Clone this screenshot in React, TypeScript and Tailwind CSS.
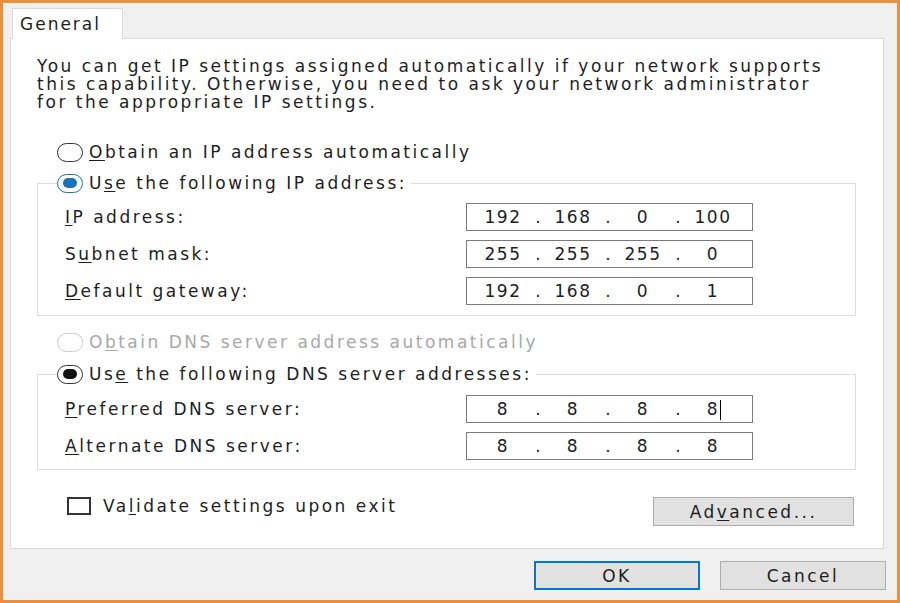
import type { ReactNode } from 'react';

const font = { fontFamily: '"DejaVu Sans", Verdana, sans-serif' };

const Radio = ({ checked, tone = 'blue', disabled }: { checked?: boolean; tone?: 'blue' | 'black'; disabled?: boolean }) => {
  const ring = disabled ? 'border-[#cccccc]' : checked && tone === 'blue' ? 'border-[#1c70b8]' : 'border-[#333333]';
  const dot = tone === 'blue' ? 'bg-[#1c70b8]' : 'bg-[#111111]';
  return (
    <span className={`w-[26px] h-[19px] rounded-full border-[1.5px] ${ring} bg-white flex items-center justify-center shrink-0`}>
      {checked && <span className={`w-[14px] h-[10px] rounded-full ${dot}`} />}
    </span>
  );
};

const IpBox = ({ parts, caret }: { parts: string[]; caret?: boolean }) => (
  <div className="w-[287px] h-[28px] border border-[#7a7a7a] bg-white flex items-center pl-[5px]">
    {parts.map((p, i) => (
      <div key={i} className="flex items-center">
        {i > 0 && <span className="w-[8px] text-center tracking-normal">.</span>}
        <span className="w-[62px] text-center relative tracking-[1.5px]">
          {p}
          {caret && i === 3 && <span className="absolute top-[0px] h-[20px] w-px bg-black ml-[1px]" />}
        </span>
      </div>
    ))}
  </div>
);

const FieldRow = ({ label, parts, caret }: { label: ReactNode; parts: string[]; caret?: boolean }) => (
  <div className="flex items-center h-[28px]">
    <span className="w-[401px]">{label}</span>
    <IpBox parts={parts} caret={caret} />
  </div>
);

export default function App() {
  return (
    <div
      className="w-[900px] h-[603px] border-[3px] border-[#e8913c] bg-[#f0f0f0] text-[17px] tracking-[2.5px] text-[#1e1e1e] leading-[18px] overflow-hidden"
      style={font}
    >
      <div className="ml-[9px] mt-[5px] w-[111px] h-[31px] bg-white border border-b-0 border-[#d9d9d9] relative z-10 -mb-px flex items-center pl-[7px] tracking-[2px]">
        General
      </div>

      <div className="ml-[7px] w-[874px] h-[511px] bg-white border border-[#d9d9d9] pl-[26px] pt-[18px]">
        <p className="whitespace-nowrap">
          You can get IP settings assigned automatically if your network supports
          <br />
          this capability. Otherwise, you need to ask your network administrator
          <br />
          for the appropriate IP settings.
        </p>

        <div className="flex items-center gap-[6px] h-[24px] mt-[29px] ml-[20px]">
          <Radio />
          <span>
            <u className="underline-offset-2">O</u>btain an IP address automatically
          </span>
        </div>

        <fieldset className="mt-[7px] w-[819px] border border-[#dcdcdc] pl-[27px] pr-0 pt-[8px] pb-[10px]">
          <legend className="ml-[-8px] flex items-center gap-[6px] h-[24px] bg-white pr-[4px]">
            <Radio checked tone="blue" />
            <span>
              U<u className="underline-offset-2">s</u>e the following IP address:
            </span>
          </legend>
          <div className="flex flex-col gap-[9px]">
            <FieldRow label={<><u className="underline-offset-2">I</u>P address:</>} parts={['192', '168', '0', '100']} />
            <FieldRow label={<>S<u className="underline-offset-2">u</u>bnet mask:</>} parts={['255', '255', '255', '0']} />
            <FieldRow label={<><u className="underline-offset-2">D</u>efault gateway:</>} parts={['192', '168', '0', '1']} />
          </div>
        </fieldset>

        <div className="flex items-center gap-[6px] h-[24px] mt-[14px] ml-[20px] text-[#a8a8a8]">
          <Radio disabled />
          <span>
            O<u className="underline-offset-2">b</u>tain DNS server address automatically
          </span>
        </div>

        <fieldset className="mt-[8px] w-[819px] border border-[#dcdcdc] pl-[27px] pr-0 pt-[9px] pb-[9px]">
          <legend className="ml-[-8px] flex items-center gap-[6px] h-[24px] bg-white pr-[4px]">
            <Radio checked tone="black" />
            <span>
              Us<u className="underline-offset-2">e</u> the following DNS server addresses:
            </span>
          </legend>
          <div className="flex flex-col gap-[9px]">
            <FieldRow label={<><u className="underline-offset-2">P</u>referred DNS server:</>} parts={['8', '8', '8', '8']} caret />
            <FieldRow label={<><u className="underline-offset-2">A</u>lternate DNS server:</>} parts={['8', '8', '8', '8']} />
          </div>
        </fieldset>

        <div className="flex items-start mt-[27px] w-[817px]">
          <div className="flex items-center gap-[12px] ml-[30px] mt-[0px] h-[18px]">
            <span className="w-[24px] h-[18px] border-2 border-[#333333] bg-white shrink-0" />
            <span>
              Va<u className="underline-offset-2">l</u>idate settings upon exit
            </span>
          </div>
          <button className="ml-auto w-[201px] h-[29px] bg-[#e1e1e1] border border-[#adadad] text-center">
            Ad<u className="underline-offset-2">v</u>anced...
          </button>
        </div>
      </div>

      <div className="flex justify-end gap-[20px] pr-[11px] mt-[12px]">
        <button className="w-[166px] h-[29px] bg-[#e1e1e1] border-2 border-[#0078d7]">OK</button>
        <button className="w-[166px] h-[29px] bg-[#e1e1e1] border border-[#adadad]">Cancel</button>
      </div>
    </div>
  );
}
